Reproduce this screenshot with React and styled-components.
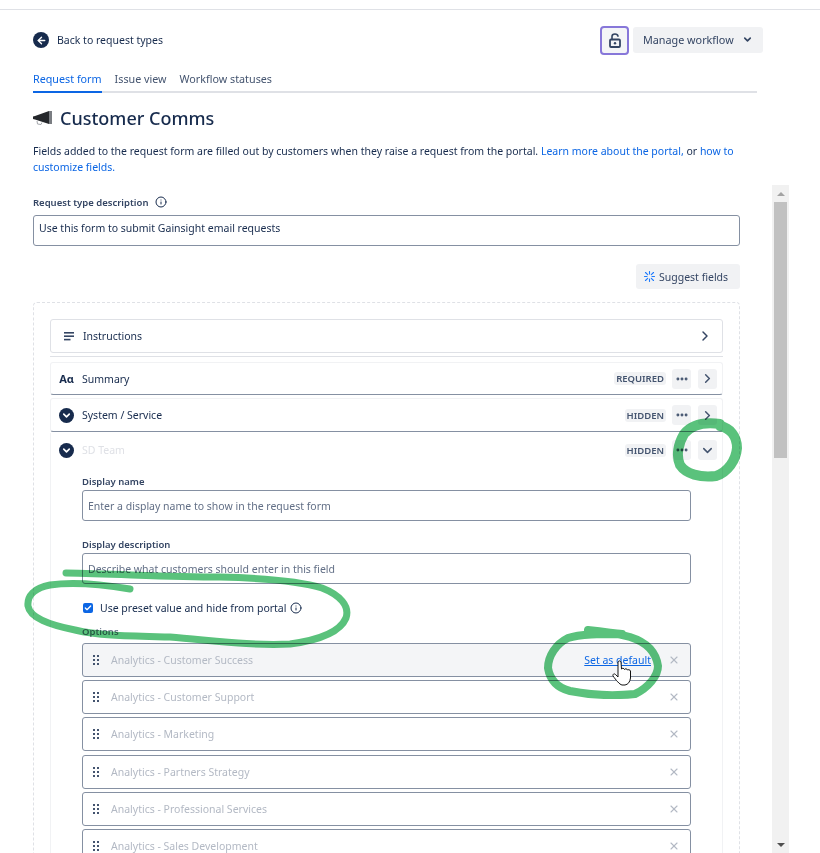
import React from 'react';
import styled, { createGlobalStyle } from 'styled-components';
import { ArrowLeft, ChevronDown, ChevronRight, Ellipsis, X, Info, Check } from 'lucide-react';

const GlobalStyle = createGlobalStyle`
  html, body {
    margin: 0;
    padding: 0;
    background: #ffffff;
  }
  * {
    box-sizing: border-box;
  }
`;

const Page = styled.div`
  position: relative;
  width: 820px;
  height: 853px;
  overflow: hidden;
  background: #ffffff;
  font-family: "Noto Sans", "Open Sans", sans-serif;
  font-size: 10.5px;
  color: #172b4d;
`;

const TopLine = styled.div`
  height: 1px;
  margin-top: 9px;
  background: #dfe1e6;
`;

const Header = styled.div`
  height: 175px;
  padding: 16px 0 0 33px;
`;

const BackRow = styled.div`
  display: flex;
  align-items: center;
  height: 28px;
  width: 730px;
`;

const BackIcon = styled.span`
  display: flex;
  align-items: center;
  justify-content: center;
  width: 16px;
  height: 16px;
  border-radius: 50%;
  background: #172b4d;
  color: #fff;
  margin-right: 8px;
`;

const BackText = styled.span`
  flex: 1;
`;

const LockButton = styled.div`
  display: flex;
  align-items: center;
  justify-content: center;
  width: 29px;
  height: 29px;
  border: 2px solid #8777d9;
  border-radius: 4px;
  background: #f4f5f7;
  margin-right: 4px;
`;

const ManageButton = styled.div`
  display: flex;
  align-items: center;
  justify-content: space-between;
  width: 130px;
  height: 26px;
  padding: 0 10px 1px;
  border-radius: 3px;
  background: #f1f2f4;
  color: #344563;
  font-size: 10.8px;
`;

const Tabs = styled.div`
  display: flex;
  gap: 13px;
  width: 724px;
  height: 26px;
  margin-top: 13px;
  border-bottom: 2px solid #dfe1e6;
  font-size: 10.75px;
`;

const Tab = styled.div`
  height: 26px;
  padding-top: 5px;
  color: ${({ $active }) => ($active ? '#0c66e4' : '#44546f')};
  border-bottom: 2px solid ${({ $active }) => ($active ? '#0c66e4' : 'transparent')};
`;

const TitleRow = styled.div`
  display: flex;
  align-items: center;
  gap: 8px;
  height: 26px;
  margin-top: 12px;
`;

const Title = styled.h1`
  margin: 0;
  font-size: 18px;
  font-weight: 500;
  color: #172b4d;
`;

const Intro = styled.p`
  width: 710px;
  margin: 12px 0 0;
  line-height: 16px;
  color: #172b4d;
`;

const TextLink = styled.span`
  color: #0c66e4;
`;

const Main = styled.div`
  display: flex;
  height: 668px;
`;

const Form = styled.div`
  width: 740px;
  margin-right: 32px;
  padding: 10px 0 0 33px;
`;

const FieldLabel = styled.div`
  display: flex;
  align-items: center;
  gap: 7px;
  height: 14px;
  margin-top: ${({ $top }) => $top || 0}px;
  font-size: 9.5px;
  font-weight: 600;
  color: #344563;
`;

const TextField = styled.div`
  display: flex;
  align-items: center;
  height: 31px;
  margin-top: ${({ $top }) => $top || 0}px;
  padding: 0 0 ${({ $lift }) => ($lift ? '5px' : 0)} 5px;
  border: 1px solid #8590a2;
  border-radius: 3px;
  background: #fff;
  color: ${({ $muted }) => ($muted ? '#626f86' : '#172b4d')};
`;

const SuggestRow = styled.div`
  display: flex;
  justify-content: flex-end;
  margin: 18px 0 13px;
`;

const SuggestButton = styled.div`
  display: flex;
  align-items: center;
  gap: 4px;
  width: 104px;
  height: 25px;
  padding-left: 8px;
  border-radius: 3px;
  background: #f1f2f4;
  color: #344563;
`;

const DropZone = styled.div`
  height: 600px;
  padding: 16px 16px 0;
  border: 1px dashed #dfe1e6;
  border-radius: 4px;
`;

const InstructionsCard = styled.div`
  display: flex;
  align-items: center;
  height: 34px;
  padding: 0 9px 0 10px;
  border: 1px solid #dfe1e6;
  border-radius: 3px;
`;

const Divider = styled.div`
  height: 1px;
  margin: 3px 0 5px;
  background: #dfe1e6;
`;

const FieldCard = styled.div`
  display: flex;
  align-items: center;
  height: ${({ $height }) => $height}px;
  margin-bottom: ${({ $after }) => $after}px;
  padding: 0 5px 0 8px;
  border: 1px solid #f1f2f4;
  border-bottom: 1px solid #8590a2;
  border-radius: 3px;
`;

const FieldIcon = styled.span`
  display: flex;
  align-items: center;
  justify-content: center;
  width: 15px;
  margin-right: ${({ $gap }) => $gap}px;
  font-size: 11px;
  font-weight: 700;
`;

const RoundIcon = styled.span`
  display: flex;
  align-items: center;
  justify-content: center;
  width: 15px;
  height: 15px;
  margin-right: 8px;
  border-radius: 50%;
  background: #172b4d;
  color: #fff;
`;

const FieldName = styled.span`
  flex: 1;
  color: ${({ $faint }) => ($faint ? '#dfe1e6' : '#172b4d')};
`;

const Lozenge = styled.span`
  height: 13px;
  padding: 0 2px;
  margin-right: 6px;
  border-radius: 3px;
  background: #f1f2f4;
  color: #44546f;
  font-size: 9.5px;
  line-height: 13px;
  font-weight: 600;
`;

const SquareButton = styled.span`
  display: flex;
  align-items: center;
  justify-content: center;
  width: 19px;
  height: 20px;
  margin-left: ${({ $gap }) => $gap || 0}px;
  border-radius: 3px;
  background: #f1f2f4;
  color: #44546f;
`;

const OpenPanel = styled.div`
  height: 430px;
  padding: 0 31px;
  border-left: 1px solid #f1f2f4;
  border-right: 1px solid #f1f2f4;
`;

const OpenHead = styled.div`
  display: flex;
  align-items: center;
  height: 34px;
  margin: 0 -26px 7px -23px;
`;

const CheckRow = styled.div`
  display: flex;
  align-items: center;
  gap: 4px;
  height: 14px;
  margin: 17px 0 0;
`;

const CheckBox = styled.span`
  display: flex;
  align-items: center;
  justify-content: center;
  width: 10px;
  height: 10px;
  margin: 0 3px 0 1px;
  border-radius: 2px;
  background: #0c66e4;
  color: #fff;
`;

const OptionsLabel = styled(FieldLabel)`
  margin: 9px 0 5px;
  color: #6b778c;
`;

const OptionRow = styled.div`
  display: flex;
  align-items: center;
  height: 34px;
  margin-bottom: 3.2px;
  padding: 0 10px;
  border: 1px solid #8590a2;
  border-radius: 3px;
  background: ${({ $hover }) => ($hover ? '#f4f5f7' : '#ffffff')};
`;

const OptionText = styled.span`
  flex: 1;
  margin-left: 12px;
  color: #b3b9c4;
`;

const SetDefault = styled.span`
  margin-right: 17px;
  color: #0c66e4;
  text-decoration: underline;
`;

const Scrollbar = styled.div`
  display: flex;
  flex-direction: column;
  align-items: center;
  width: 17px;
  background: #f1f1f1;
`;

const ScrollArrow = styled.div`
  flex: ${({ $grow }) => ($grow ? 1 : 'none')};
  display: flex;
  align-items: ${({ $grow }) => ($grow ? 'flex-end' : 'center')};
  height: 17px;
  padding-bottom: ${({ $grow }) => ($grow ? '6px' : 0)};
  &::before {
    content: '';
    border-left: 4px solid transparent;
    border-right: 4px solid transparent;
    ${({ $grow }) => ($grow
      ? 'border-top: 4px solid #505050;'
      : 'border-bottom: 4px solid #a3a3a3;')}
  }
`;

const ScrollThumb = styled.div`
  width: 13px;
  height: 256px;
  background: #c1c1c1;
`;

const Overlay = styled.svg`
  position: absolute;
  left: 0;
  top: 0;
  pointer-events: none;
  mix-blend-mode: ${({ $blend }) => ($blend ? 'multiply' : 'normal')};
`;

const GripIcon = () => (
  <svg width="6" height="10" viewBox="0 0 6 10" fill="#44546f">
    {[0, 4, 8].map((y) => (
      <React.Fragment key={y}>
        <rect x="0" y={y} width="2" height="2" />
        <rect x="4" y={y} width="2" height="2" />
      </React.Fragment>
    ))}
  </svg>
);

const Megaphone = () => (
  <svg width="19" height="16" viewBox="0 0 19 16">
    <path d="M0 6.5 L2 6 L16 1 L16 14 L2 9.5 L0 9 Z" fill="#25272b" />
    <rect x="16" y="1" width="3" height="13" fill="#7a7d82" />
    <path d="M4 11 L4.5 14 L8 14.5 L9 12.5" fill="none" stroke="#a5a8ad" strokeWidth="1" />
  </svg>
);

const LinesIcon = () => (
  <svg width="10" height="9" viewBox="0 0 10 9" fill="#344563">
    <rect x="0" y="0" width="10" height="1.6" />
    <rect x="0" y="3.4" width="10" height="1.6" />
    <rect x="0" y="6.8" width="6.5" height="1.6" />
  </svg>
);

const SparkIcon = () => (
  <svg width="11" height="11" viewBox="0 0 11 11" stroke="#1d7afc" strokeWidth="1.1" strokeLinecap="round">
    <path d="M5.5 0.5V3M5.5 8V10.5M0.5 5.5H3M8 5.5H10.5M1.5 1.5L3.7 3.7M7.3 7.3L9.5 9.5M9.5 1.5L7.3 3.7M3.7 7.3L1.5 9.5" />
  </svg>
);

const UnlockIcon = () => (
  <svg width="12" height="15" viewBox="0 0 12 15">
    <path d="M3 6.5V3.5C3 2 4.2 1 6 1C7.6 1 8.8 1.9 9 3.2" fill="none" stroke="#344563" strokeWidth="1.6" strokeLinecap="round" />
    <rect x="1" y="6.5" width="10" height="7.5" rx="1" fill="none" stroke="#344563" strokeWidth="1.8" />
    <circle cx="6" cy="10.2" r="1.2" fill="#344563" />
  </svg>
);

const optionNames = [
  'Analytics - Customer Success',
  'Analytics - Customer Support',
  'Analytics - Marketing',
  'Analytics - Partners Strategy',
  'Analytics - Professional Services',
  'Analytics - Sales Development',
];

const App = () => (
  <Page>
    <GlobalStyle />
    <TopLine />
    <Header>
      <BackRow>
        <BackIcon><ArrowLeft size={11} strokeWidth={3} /></BackIcon>
        <BackText>Back to request types</BackText>
        <LockButton><UnlockIcon /></LockButton>
        <ManageButton>
          Manage workflow
          <ChevronDown size={11} strokeWidth={3.5} />
        </ManageButton>
      </BackRow>
      <Tabs>
        <Tab $active>Request form</Tab>
        <Tab>Issue view</Tab>
        <Tab>Workflow statuses</Tab>
      </Tabs>
      <TitleRow>
        <Megaphone />
        <Title>Customer Comms</Title>
      </TitleRow>
      <Intro>
        Fields added to the request form are filled out by customers when they raise a request from the portal.{' '}
        <TextLink>Learn more about the portal,</TextLink> or <TextLink>how to</TextLink>
        <br />
        <TextLink>customize fields.</TextLink>
      </Intro>
    </Header>
    <Main>
      <Form>
        <FieldLabel>
          Request type description
          <Info size={12} color="#172b4d" />
        </FieldLabel>
        <TextField $top={6} $lift>Use this form to submit Gainsight email requests</TextField>
        <SuggestRow>
          <SuggestButton><SparkIcon />Suggest fields</SuggestButton>
        </SuggestRow>
        <DropZone>
          <InstructionsCard>
            <FieldIcon $gap={7}><LinesIcon /></FieldIcon>
            <FieldName>Instructions</FieldName>
            <ChevronRight size={16} strokeWidth={2.2} color="#344563" />
          </InstructionsCard>
          <Divider />
          <FieldCard $height={33} $after={3}>
            <FieldIcon $gap={8}>Aɑ</FieldIcon>
            <FieldName>Summary</FieldName>
            <Lozenge>REQUIRED</Lozenge>
            <SquareButton><Ellipsis size={14} strokeWidth={3} /></SquareButton>
            <SquareButton $gap={7}><ChevronRight size={15} strokeWidth={2.4} /></SquareButton>
          </FieldCard>
          <FieldCard $height={34} $after={1}>
            <RoundIcon><ChevronDown size={11} strokeWidth={3.5} /></RoundIcon>
            <FieldName>System / Service</FieldName>
            <Lozenge>HIDDEN</Lozenge>
            <SquareButton><Ellipsis size={14} strokeWidth={3} /></SquareButton>
            <SquareButton $gap={7}><ChevronRight size={15} strokeWidth={2.4} /></SquareButton>
          </FieldCard>
          <OpenPanel>
            <OpenHead>
              <RoundIcon><ChevronDown size={11} strokeWidth={3.5} /></RoundIcon>
              <FieldName $faint>SD Team</FieldName>
              <Lozenge>HIDDEN</Lozenge>
              <SquareButton><Ellipsis size={14} strokeWidth={3} /></SquareButton>
              <SquareButton $gap={7}><ChevronDown size={15} strokeWidth={2.4} /></SquareButton>
            </OpenHead>
            <FieldLabel>Display name</FieldLabel>
            <TextField $top={2} $muted>Enter a display name to show in the request form</TextField>
            <FieldLabel $top={16}>Display description</FieldLabel>
            <TextField $top={2} $muted>Describe what customers should enter in this field</TextField>
            <CheckRow>
              <CheckBox><Check size={8} strokeWidth={4} /></CheckBox>
              Use preset value and hide from portal
              <Info size={12} color="#172b4d" />
            </CheckRow>
            <OptionsLabel>Options</OptionsLabel>
            {optionNames.map((name, i) => (
              <OptionRow key={name} $hover={i === 0}>
                <GripIcon />
                <OptionText>{name}</OptionText>
                {i === 0 && <SetDefault>Set as default</SetDefault>}
                <X size={12} strokeWidth={2.2} color="#b3b9c4" />
              </OptionRow>
            ))}
          </OpenPanel>
        </DropZone>
      </Form>
      <Scrollbar>
        <ScrollArrow />
        <ScrollThumb />
        <ScrollArrow $grow />
      </Scrollbar>
    </Main>

    <Overlay $blend width="820" height="853" viewBox="0 0 820 853" fill="none" stroke="#5ac27c" strokeLinecap="round" strokeLinejoin="round">
      <path strokeWidth="10" d="M720 424 C706 422 692 424 684 434 C678 444 676 456 680 465 C686 474 700 478 716 476 C728 472 736 460 737 448 C737 436 730 428 720 426" />
      <path strokeWidth="7" d="M66 573 C120 574 170 577 220 577 C260 578 300 581 322 588 C340 595 350 606 346 618 C340 632 320 640 290 644 C250 646 210 640 170 637 C130 636 100 636 75 630 C50 625 30 618 28 606 C27 596 34 588 50 585 C70 582 100 584 130 589" />
      <path strokeWidth="8" d="M588 630 C600 632 612 633 622 634 C600 634 580 634 568 638 C556 644 548 656 548 668 C550 680 558 688 570 691 C590 695 615 696 635 694 C648 688 658 676 658 666 C656 652 646 642 630 637 C615 633 600 631 588 630" />
    </Overlay>
    <Overlay width="820" height="853" viewBox="0 0 820 853">
      <path d="M618 662 C618.5 660.5 620.5 660.5 621 662 L621.5 669 C622 668 624 668 624.5 669.5 C625 668.5 627 668.5 627.5 670 C628 669.5 630 669.5 630.5 671 L630.5 678 C630 682 628 684.5 625 685 L622 685 C619.5 684.5 616 680 613 676 C612.5 674.5 614 673 615.5 674.5 L618 677 Z" fill="#ffffff" stroke="#111" strokeWidth="1" strokeLinejoin="round" />
    </Overlay>
  </Page>
);

export default App;
